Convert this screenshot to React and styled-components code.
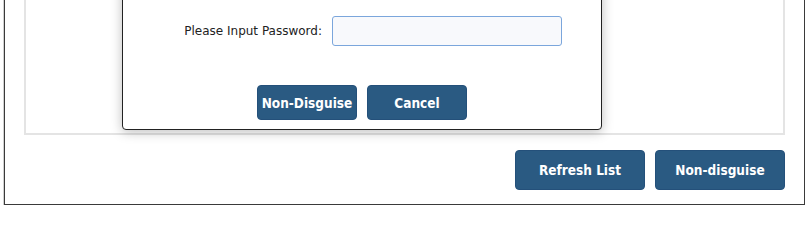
import React from "react";
import styled, { createGlobalStyle } from "styled-components";

const GlobalStyle = createGlobalStyle`
  body {
    margin: 0;
    background: #ffffff;
    font-family: "DejaVu Sans", "Liberation Sans", sans-serif;
    color: #222222;
  }
`;

const Page = styled.div`
  width: 801px;
  padding-left: 4px;
  overflow: hidden;
  height: 206px;
`;

const OuterPanel = styled.div`
  box-sizing: border-box;
  height: 205px;
  border: 1px solid #3a3a3a;
  border-top: none;
  box-shadow: -1px 0 0 #d0d0d0;
  padding: 0 19px 14px 19px;
  display: flex;
  flex-direction: column;
`;

const ListBox = styled.div`
  position: relative;
  box-sizing: border-box;
  height: 135px;
  border: 2px solid #e4e4e4;
  border-top: none;
`;

const Dialog = styled.div`
  position: absolute;
  left: 96px;
  bottom: 3px;
  width: 478px;
  background: #ffffff;
  border: 1px solid #222222;
  border-radius: 4px;
  box-shadow: 0 2px 12px rgba(0, 0, 0, 0.26);
  padding: 60px 0 9px;
  display: flex;
  flex-direction: column;
  gap: 39px;
`;

const FieldRow = styled.div`
  display: grid;
  grid-template-columns: 199px 230px;
  column-gap: 10px;
  align-items: center;
`;

const Label = styled.label`
  text-align: right;
  font-size: 12px;
  color: #222222;
  white-space: nowrap;
`;

const Input = styled.input`
  box-sizing: border-box;
  width: 230px;
  height: 30px;
  border: 1px solid #7ba6dc;
  border-radius: 3px;
  background: #f8f9fc;
  outline: none;
`;

const ButtonRow = styled.div`
  display: flex;
  justify-content: ${(p) => (p.$align === "right" ? "flex-end" : "center")};
  gap: 10px;
`;

const Button = styled.button`
  box-sizing: border-box;
  width: ${(p) => p.$w}px;
  height: ${(p) => p.$h}px;
  background: #2a5a82;
  border: 1px solid #24507a;
  border-radius: 4px;
  color: #ffffff;
  font-family: "DejaVu Sans", "Liberation Sans", sans-serif;
  font-stretch: condensed;
  font-weight: bold;
  font-size: 13.5px;
  padding: 0;
  cursor: pointer;
`;

const Footer = styled(ButtonRow)`
  margin-top: 15px;
`;

export default function App() {
  return (
    <>
      <GlobalStyle />
      <Page>
        <OuterPanel>
          <ListBox>
            <Dialog>
              <FieldRow>
                <Label htmlFor="pwd">Please Input Password:</Label>
                <Input id="pwd" type="password" />
              </FieldRow>
              <ButtonRow>
                <Button $w={100} $h={35}>Non-Disguise</Button>
                <Button $w={100} $h={35}>Cancel</Button>
              </ButtonRow>
            </Dialog>
          </ListBox>
          <Footer $align="right">
            <Button $w={130} $h={40}>Refresh List</Button>
            <Button $w={130} $h={40}>Non-disguise</Button>
          </Footer>
        </OuterPanel>
      </Page>
    </>
  );
}
